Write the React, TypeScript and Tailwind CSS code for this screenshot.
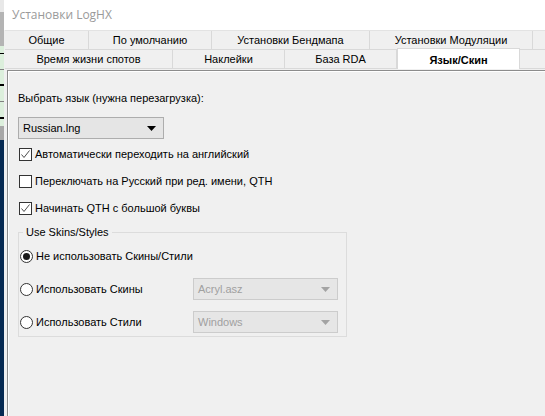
import type { ReactNode } from "react";

const ui = { fontFamily: '"Liberation Sans", Arial, sans-serif' };

type Tab = { label: string; w: string; active?: boolean };

const topRow: Tab[] = [
  { label: "Общие", w: "w-[84px]" },
  { label: "По умолчанию", w: "w-[123px]" },
  { label: "Установки Бендмапа", w: "w-[158px]" },
  { label: "Установки Модуляции", w: "w-[163px]" },
  { label: "", w: "w-[40px]" },
];

const bottomRow: Tab[] = [
  { label: "Время жизни спотов", w: "w-[168px]" },
  { label: "Наклейки", w: "w-[112px]" },
  { label: "База RDA", w: "w-[112px]" },
  { label: "Язык/Скин", w: "w-[123px]", active: true },
  { label: "", w: "w-[40px]" },
];

function TabRow({ tabs }: { tabs: Tab[] }) {
  return (
    <div className="flex h-[19px] shrink-0">
      {tabs.map((t, i) =>
        t.active ? (
          <div
            key={i}
            className={`${t.w} relative z-10 -mt-[2px] flex h-[23px] shrink-0 items-center justify-center border-x border-t border-[#d9d9d9] bg-white text-[11px] font-bold text-black`}
          >
            {t.label}
          </div>
        ) : (
          <div
            key={i}
            className={`${t.w} flex shrink-0 items-center justify-center border-r border-b border-[#d9d9d9] bg-[#f0f0f0] text-[11px] text-black`}
          >
            {t.label}
          </div>
        ),
      )}
    </div>
  );
}

function CheckBox({ checked, children }: { checked?: boolean; children: ReactNode }) {
  return (
    <label className="flex h-[14px] items-center gap-[3px]">
      <span className="flex h-[13px] w-[13px] items-center justify-center border border-[#333333] bg-white">
        {checked && (
          <svg width="11" height="11" viewBox="0 0 11 11">
            <polyline points="1.5,5.5 4,8.5 9.5,1.5" fill="none" stroke="#4d4d4d" strokeWidth="1" />
          </svg>
        )}
      </span>
      <span className="text-[11px] text-black">{children}</span>
    </label>
  );
}

function Radio({ checked, children }: { checked?: boolean; children: ReactNode }) {
  return (
    <label className="flex items-center gap-[3px]">
      <span className="flex h-[13px] w-[13px] items-center justify-center rounded-full border border-[#333333] bg-white">
        {checked && <span className="h-[7px] w-[7px] rounded-full bg-[#1a1a1a]" />}
      </span>
      <span className="text-[11px] text-black">{children}</span>
    </label>
  );
}

function Arrow({ color }: { color: string }) {
  return (
    <svg width="9" height="5" viewBox="0 0 9 5">
      <polygon points="0,0 9,0 4.5,5" fill={color} />
    </svg>
  );
}

function Combo({ value, disabled, w }: { value: string; disabled?: boolean; w: string }) {
  return (
    <div
      className={`${w} flex h-[22px] items-center justify-between border pl-[4px] pr-[7px] text-[11px] ${
        disabled ? "border-[#cccccc] bg-[#e6e6e6] text-[#a0a0a0]" : "border-[#adadad] bg-[#e5e5e5] text-black"
      }`}
    >
      <span>{value}</span>
      <Arrow color={disabled ? "#a3a3a3" : "#000000"} />
    </div>
  );
}

export default function App() {
  return (
    <div className="flex h-[416px] w-[545px] overflow-hidden bg-[#f0f0f0]" style={ui}>
      {/* edge of the window behind */}
      <div className="flex w-[4px] shrink-0 flex-col">
        <div className="h-[12px] bg-[#e8e8e8]" />
        <div className="h-[34px] bg-[#b4b4b4]" />
        <div className="flex h-[80px] flex-col justify-around bg-[#dcefdc]">
          <div className="h-[1px] bg-black" />
          <div className="h-[1px] bg-[#808080]" />
          <div className="h-[2px] bg-black" />
          <div className="h-[1px] bg-[#808080]" />
          <div className="h-[2px] bg-black" />
        </div>
        <div className="h-[14px] bg-[#a8a8a8]" />
        <div className="flex-1 bg-[#062a52]" />
      </div>

      <div className="flex min-w-0 flex-1 flex-col">
        <div className="flex h-[30px] shrink-0 items-center bg-white pl-[8px] text-[12px] text-[#9a9a9a]" style={{ fontFamily: '"Open Sans", "Noto Sans", sans-serif' }}>
          Установки LogHX
        </div>

        <div className="flex shrink-0 flex-col overflow-hidden pl-[1px]">
          <div className="border-t border-[#e3e3e3]">
            <TabRow tabs={topRow} />
          </div>
          <TabRow tabs={bottomRow} />
        </div>

        <div className="ml-[3px] mt-[1px] flex flex-1 flex-col border-t border-l border-[#8c8c8c] bg-[#f0f0f0] pl-[10px] shadow-[inset_1px_1px_0_#ffffff]">
          <div className="mt-[20px] h-[14px] text-[11px] leading-[14px] text-black">Выбрать язык (нужна перезагрузка):</div>

          <div className="mt-[12px]">
            <Combo value="Russian.lng" w="w-[146px]" />
          </div>

          <div className="ml-[1px] mt-[8px] flex flex-col gap-[13px]">
            <CheckBox checked>Автоматически переходить на английский</CheckBox>
            <CheckBox>Переключать на Русский при ред. имени, QTH</CheckBox>
            <CheckBox checked>Начинать QTH с большой буквы</CheckBox>
          </div>

          <fieldset className="mt-[10px] w-[329px] border border-[#dcdcdc] pb-[3px] pl-[1px]">
            <legend className="ml-[3px] px-[3px] text-[11px] leading-[14px] text-black">Use Skins/Styles</legend>
            <div className="mt-[6px] flex flex-col gap-[11px]">
              <div className="flex h-[22px] items-center">
                <Radio checked>Не использовать Скины/Стили</Radio>
              </div>
              <div className="flex h-[22px] items-center justify-between pr-[8px]">
                <Radio>Использовать Скины</Radio>
                <Combo value="Acryl.asz" disabled w="w-[145px]" />
              </div>
              <div className="flex h-[22px] items-center justify-between pr-[8px]">
                <Radio>Использовать Стили</Radio>
                <Combo value="Windows" disabled w="w-[145px]" />
              </div>
            </div>
          </fieldset>
        </div>
      </div>
    </div>
  );
}
